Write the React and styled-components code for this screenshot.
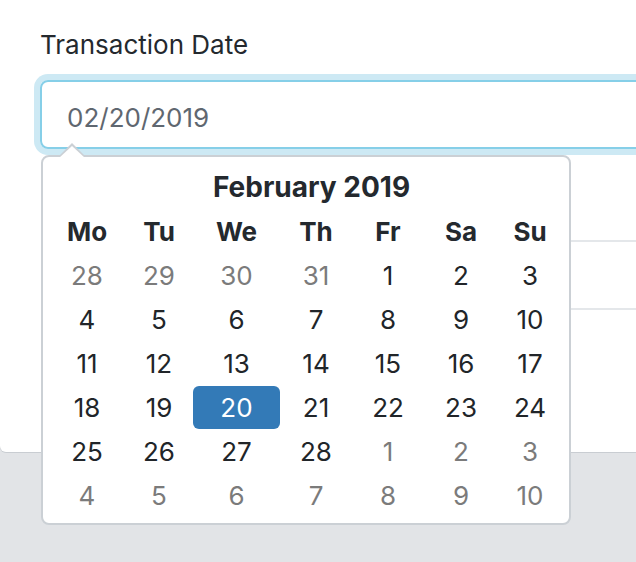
import React from "react";
import styled, { createGlobalStyle } from "styled-components";

const Global = createGlobalStyle`
  html, body { margin: 0; padding: 0; }
  body {
    background: #e2e4e7;
    font-family: Inter, "Noto Sans", Roboto, sans-serif;
    color: #212529;
    overflow: hidden;
  }
`;

const Page = styled.div`
  width: 636px;
  height: 562px;
  overflow: hidden;
`;

const Card = styled.div`
  width: 720px;
  height: 452px;
  background: #fff;
  border-bottom-left-radius: 6px;
  box-shadow: 0 1px 0 #c9cdd2;
  padding: 29px 0 0 40px;
  box-sizing: border-box;
  display: flex;
  flex-direction: column;
`;

const Label = styled.label`
  font-size: 26px;
  line-height: 32px;
  color: #24292e;
  margin-bottom: 19px;
`;

const Field = styled.div`
  position: relative;
`;

const Input = styled.div`
  height: 69px;
  box-sizing: border-box;
  border: 2px solid #86cfe8;
  border-radius: 8px;
  box-shadow: 0 0 0 6px #cde9f4;
  display: flex;
  align-items: center;
  padding: 5px 0 0 25px;
  font-size: 26px;
  color: #5f6770;
`;

const Second = styled.div`
  margin: 91px 0 0 4px;
  height: 70px;
  box-sizing: border-box;
  border-top: 2px solid #e4e7ea;
  border-bottom: 2px solid #e4e7ea;
`;

const Popover = styled.div`
  position: absolute;
  left: 1px;
  top: 75px;
  width: 530px;
  box-sizing: border-box;
  background: #fff;
  border: 2px solid #cbd0d5;
  border-radius: 8px;
  padding: 8px 7px 6px 6px;
  z-index: 2;

  &::before,
  &::after {
    content: "";
    position: absolute;
    left: 16px;
    width: 0;
    height: 0;
    border-left: 13px solid transparent;
    border-right: 13px solid transparent;
  }
  &::before {
    top: -14px;
    border-bottom: 13px solid #cbd0d5;
  }
  &::after {
    top: -11px;
    border-bottom: 12px solid #fff;
  }
`;

const Grid = styled.div`
  display: grid;
  grid-template-columns: 76px 68px 87px 72px 72px 74px 64px;
  grid-auto-rows: 44px;
  align-items: center;
`;

const Title = styled.div`
  grid-column: 2 / 7;
  text-align: center;
  font-weight: 700;
  font-size: 28px;
  color: #24292e;
`;

const Spacer = styled.div``;

const Head = styled.div`
  text-align: center;
  font-weight: 700;
  font-size: 26px;
  color: #24292e;
`;

const Day = styled.div`
  height: 43px;
  display: flex;
  align-items: center;
  justify-content: center;
  font-size: 26px;
  border-radius: 6px;
  color: ${(p) => (p.$active ? "#fff" : p.$muted ? "#7b7b7b" : "#212529")};
  background: ${(p) => (p.$active ? "#337ab7" : "transparent")};
`;

const heads = ["Mo", "Tu", "We", "Th", "Fr", "Sa", "Su"];

const days = [];
[28, 29, 30, 31].forEach((d) => days.push({ d, muted: true }));
for (let i = 1; i <= 28; i++) days.push({ d: i, active: i === 20 });
for (let i = 1; i <= 10; i++) days.push({ d: i, muted: true });

export default function App() {
  return (
    <Page>
      <Global />
      <Card>
        <Label>Transaction Date</Label>
        <Field>
          <Input>02/20/2019</Input>
          <Popover>
            <Grid>
              <Spacer />
              <Title>February 2019</Title>
              <Spacer />
              {heads.map((h) => (
                <Head key={h}>{h}</Head>
              ))}
              {days.map((x, i) => (
                <Day key={i} $muted={x.muted} $active={x.active}>
                  {x.d}
                </Day>
              ))}
            </Grid>
          </Popover>
        </Field>
        <Second />
      </Card>
    </Page>
  );
}
